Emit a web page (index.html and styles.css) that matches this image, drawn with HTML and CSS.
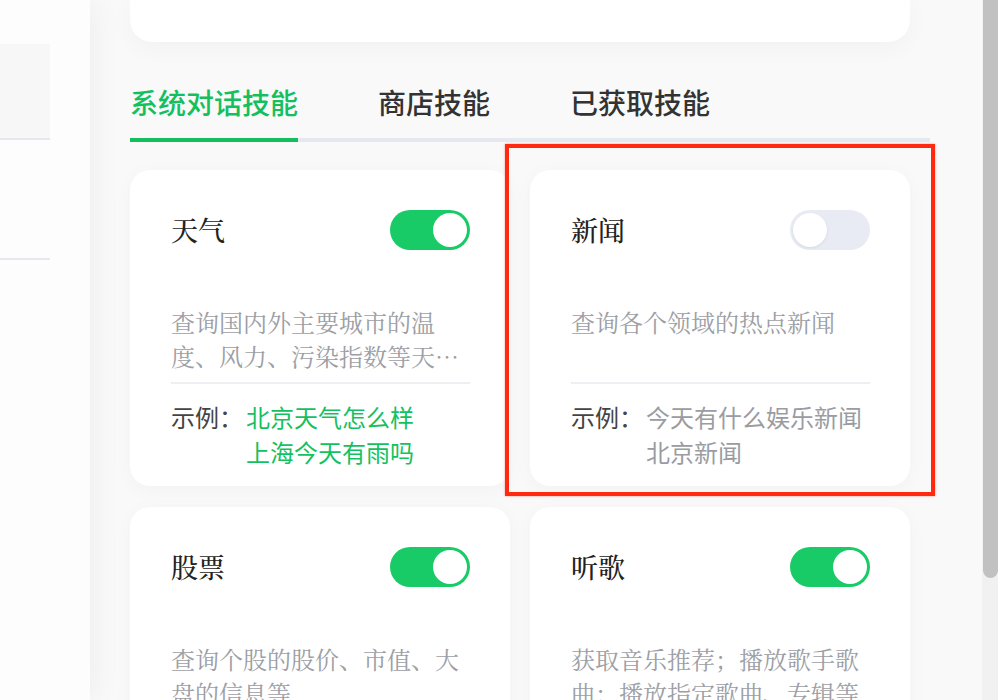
FILE: index.html
```html
<!DOCTYPE html>
<html lang="zh-CN">
<head>
<meta charset="utf-8">
<title>技能</title>
<link rel="stylesheet" href="styles.css">
</head>
<body>
<div class="page">
  <aside class="sidebar">
    <div class="side-item side-item-active"></div>
    <div class="side-item side-item-tall"></div>
  </aside>
  <main class="main">
    <div class="top-card"></div>
    <nav class="tabs">
      <div class="tab tab-active">系统对话技能</div>
      <div class="tab">商店技能</div>
      <div class="tab">已获取技能</div>
    </nav>
    <section class="grid">
      <article class="card">
        <div class="card-head">
          <h3 class="card-title">天气</h3>
          <span class="toggle toggle-on"><span class="knob"></span></span>
        </div>
        <p class="card-desc">查询国内外主要城市的温度、风力、污染指数等天气情况</p>
        <div class="divider"></div>
        <div class="examples">
          <span class="ex-label">示例：</span>
          <div class="ex-list ex-green">
            <div>北京天气怎么样</div>
            <div>上海今天有雨吗</div>
          </div>
        </div>
      </article>
      <article class="card">
        <div class="card-head">
          <h3 class="card-title">新闻</h3>
          <span class="toggle toggle-off"><span class="knob"></span></span>
        </div>
        <p class="card-desc">查询各个领域的热点新闻</p>
        <div class="divider"></div>
        <div class="examples">
          <span class="ex-label">示例：</span>
          <div class="ex-list ex-gray">
            <div>今天有什么娱乐新闻</div>
            <div>北京新闻</div>
          </div>
        </div>
      </article>
      <article class="card">
        <div class="card-head">
          <h3 class="card-title">股票</h3>
          <span class="toggle toggle-on"><span class="knob"></span></span>
        </div>
        <p class="card-desc">查询个股的股价、市值、大盘的信息等</p>
        <div class="divider"></div>
        <div class="examples">
          <span class="ex-label">示例：</span>
          <div class="ex-list ex-green">
            <div>腾讯股价多少</div>
            <div>今天大盘怎么样</div>
          </div>
        </div>
      </article>
      <article class="card">
        <div class="card-head">
          <h3 class="card-title">听歌</h3>
          <span class="toggle toggle-on"><span class="knob"></span></span>
        </div>
        <p class="card-desc">获取音乐推荐；播放歌手歌曲；播放指定歌曲、专辑等</p>
        <div class="divider"></div>
        <div class="examples">
          <span class="ex-label">示例：</span>
          <div class="ex-list ex-green">
            <div>播放周杰伦的歌</div>
            <div>来首轻音乐</div>
          </div>
        </div>
      </article>
    </section>
  </main>
  <div class="scrollbar"><div class="thumb"></div></div>
  <div class="highlight"></div>
</div>
</body>
</html>
```

FILE: styles.css
```css
* { box-sizing: border-box; }
html, body { margin: 0; padding: 0; }
body {
  width: 998px;
  height: 700px;
  overflow: hidden;
  background: #f9f9fa;
  font-family: "Noto Sans CJK SC", "Noto Sans", sans-serif;
}
.page {
  position: relative;
  display: flex;
  width: 998px;
  height: 700px;
  overflow: hidden;
}
.sidebar {
  width: 90px;
  flex: none;
  background: #fdfdfd;
  box-shadow: 6px 0 30px rgba(0, 0, 0, 0.045);
  position: relative;
  z-index: 1;
  padding-top: 44px;
}
.side-item {
  width: 50px;
  border-bottom: 2px solid #e5e8ee;
}
.side-item-active {
  height: 96px;
  background: #f7f7f8;
}
.side-item-tall {
  height: 120px;
}
.main {
  flex: 1;
  padding-left: 40px;
  background: #f9f9fa;
}
.top-card {
  width: 780px;
  height: 42px;
  background: #fff;
  border-radius: 0 0 22px 22px;
  box-shadow: 0 6px 24px rgba(0, 0, 0, 0.035);
}
.tabs {
  display: flex;
  gap: 80px;
  width: 800px;
  margin-top: 40px;
  border-bottom: 4px solid #e5e8ef;
}
.tab {
  font-size: 28px;
  line-height: 40px;
  font-weight: 500;
  color: #333;
  padding-bottom: 16px;
  border-bottom: 4px solid transparent;
  margin-bottom: -4px;
}
.tab-active {
  color: #14bf5e;
  border-bottom-color: #12bf5c;
}
.grid {
  display: grid;
  grid-template-columns: 380px 380px;
  column-gap: 20px;
  row-gap: 21px;
  margin-top: 28px;
}
.card {
  background: #fff;
  border-radius: 20px;
  padding: 40px 40px 17px 41px;
  box-shadow: 0 4px 20px rgba(0, 0, 0, 0.03);
}
.card-head {
  display: flex;
  justify-content: space-between;
  align-items: center;
  height: 40px;
}
.card-title {
  margin: 0;
  font-family: "Noto Serif CJK SC", "Noto Sans CJK SC", serif;
  font-size: 27px;
  font-weight: 500;
  color: #222;
  line-height: 40px;
}
.toggle {
  width: 80px;
  height: 40px;
  border-radius: 20px;
  display: flex;
  align-items: center;
  padding: 0 3px;
}
.toggle-on {
  background: #18cb66;
  justify-content: flex-end;
}
.toggle-off {
  background: #e8ebf3;
  justify-content: flex-start;
}
.knob {
  width: 34px;
  height: 34px;
  border-radius: 50%;
  background: #fff;
}
.toggle-off .knob {
  box-shadow: 0 1px 3px rgba(0, 0, 0, 0.08);
}
.card-desc {
  margin: 55px 0 0;
  height: 68px;
  font-family: "Noto Serif CJK SC", "Noto Sans CJK SC", serif;
  font-size: 24px;
  line-height: 34px;
  color: #9c9ea4;
  display: -webkit-box;
  -webkit-line-clamp: 2;
  -webkit-box-orient: vertical;
  overflow: hidden;
}
.divider {
  margin-top: 9px;
  height: 2px;
  background: #eeeff2;
}
.examples {
  display: flex;
  margin-top: 15px;
  font-size: 24px;
  line-height: 35px;
}
.ex-label {
  width: 75px;
  flex: none;
  color: #444;
}
.ex-green { color: #14c160; }
.ex-gray { color: #9a9ca2; }
.scrollbar {
  width: 16px;
  flex: none;
  background: #f1f1f1;
  padding-left: 1px;
}
.thumb {
  height: 578px;
  background: #c1c1c1;
  border-radius: 0 0 8px 8px;
}
.highlight {
  position: absolute;
  left: 505px;
  top: 144px;
  width: 430px;
  height: 352px;
  border: 4px solid #ff2a10;
  box-shadow: 0 0 2px rgba(255, 42, 16, 0.5);
}
```
